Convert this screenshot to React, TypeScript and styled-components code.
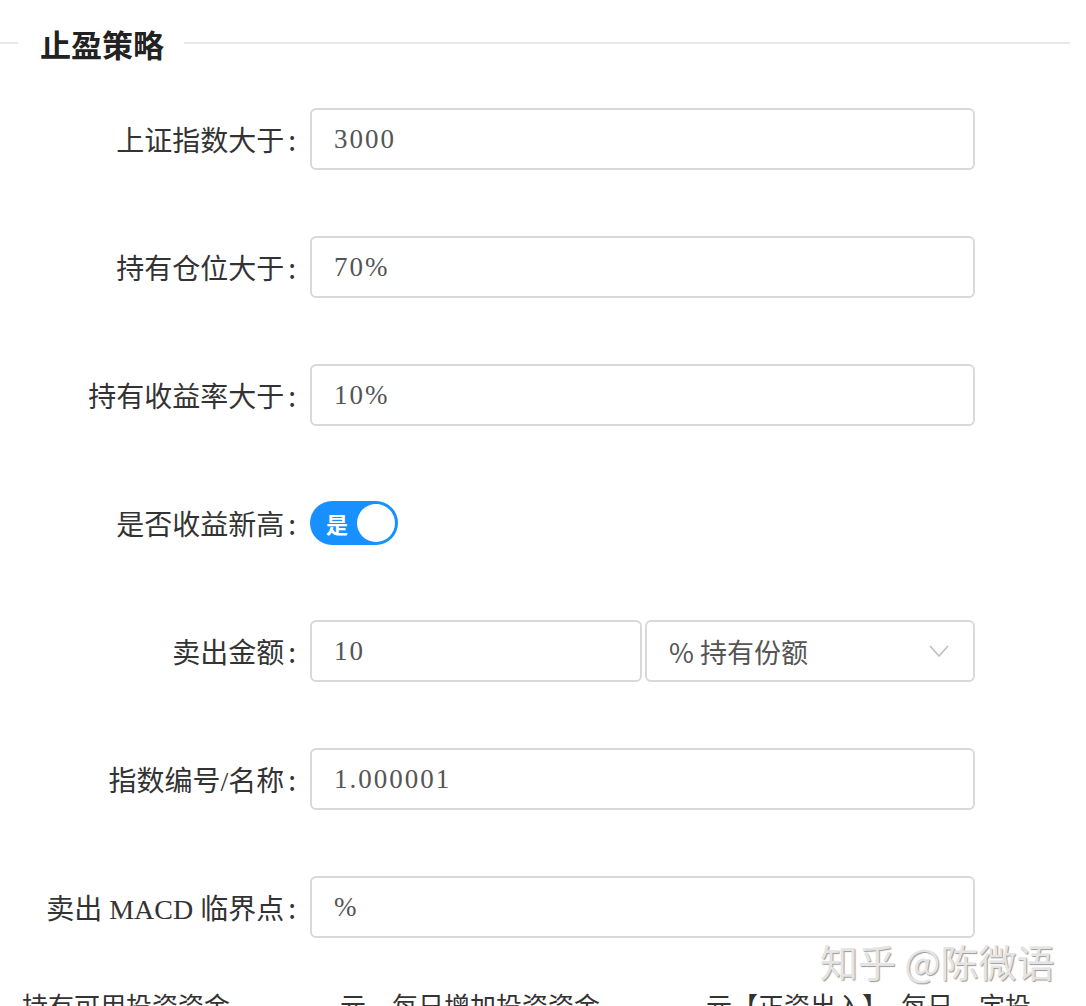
import React from "react";
import styled, { createGlobalStyle } from "styled-components";

const Global = createGlobalStyle`
  html, body { margin: 0; padding: 0; background: #fff; }
  body { font-family: "Liberation Serif", "Noto Sans CJK SC", serif; color: #333; }
  * { box-sizing: border-box; }
`;

const Page = styled.div`
  position: relative;
  width: 1086px;
  padding: 0 16px 0 0;
`;

const Legend = styled.div`
  display: flex;
  align-items: center;
  height: 86px;
  &::before {
    content: "";
    width: 18px;
    height: 2px;
    background: #e8e8e8;
  }
  &::after {
    content: "";
    flex: 1;
    height: 2px;
    background: #e8e8e8;
  }
`;

const LegendText = styled.span`
  font-family: "Noto Sans CJK SC", sans-serif;
  font-weight: 700;
  font-size: 31px;
  color: #222;
  padding: 0 20px 0 22px;
`;

const Form = styled.div`
  display: flex;
  flex-direction: column;
  gap: 66px;
  margin-top: 22px;
`;

const Row = styled.div`
  display: flex;
  align-items: center;
  height: 62px;
`;

const Label = styled.label`
  width: 296px;
  flex: none;
  text-align: right;
  margin-right: 14px;
  font-family: "Liberation Serif", "Noto Sans CJK SC", serif;
  font-size: 28px;
  color: #333;
  white-space: nowrap;
`;

const Colon = styled.span`
  font-family: "Noto Sans CJK SC", sans-serif;
  margin-left: 4px;
`;

const Field = styled.div<{ $w?: number }>`
  width: ${(p) => p.$w ?? 665}px;
  height: 62px;
  border: 2px solid #d9d9d9;
  border-radius: 6px;
  display: flex;
  align-items: center;
  padding: 0 22px;
  font-family: "Liberation Serif", "Noto Sans CJK SC", serif;
  font-size: 27px;
  letter-spacing: 2px;
  color: #555;
  background: #fff;
`;

const Pair = styled.div`
  display: flex;
  gap: 3px;
`;

const SelectBox = styled(Field)`
  justify-content: space-between;
  font-family: "Noto Sans CJK SC", sans-serif;
  font-size: 27px;
  letter-spacing: 0;
  padding-right: 24px;
`;

const Switch = styled.div`
  width: 88px;
  height: 44px;
  border-radius: 22px;
  background: #1890ff;
  display: flex;
  align-items: center;
  justify-content: space-between;
  padding: 0 3px 0 16px;
`;

const SwitchText = styled.span`
  font-family: "Noto Sans CJK SC", sans-serif;
  font-size: 22px;
  font-weight: 700;
  color: #fff;
`;

const Knob = styled.span`
  width: 38px;
  height: 38px;
  border-radius: 50%;
  background: #fff;
`;

const Watermark = styled.div`
  position: absolute;
  left: 820px;
  top: 933px;
  font-family: "Noto Sans CJK SC", sans-serif;
  font-size: 38px;
  color: #e4e4e4;
  text-shadow: 1px 1px 1px #9a9a9a;
  white-space: nowrap;
`;

const Footer = styled.div`
  margin-top: 48px;
  padding-left: 22px;
  font-family: "Noto Sans CJK SC", sans-serif;
  font-size: 26px;
  color: #333;
  white-space: nowrap;
`;

const Blank = styled.span<{ $w: number }>`
  display: inline-block;
  width: ${(p) => p.$w}px;
`;

const Chevron = () => (
  <svg width="20" height="12" viewBox="0 0 20 12" fill="none">
    <path d="M1 1l9 10 9-10" stroke="#bfbfbf" strokeWidth="1.6" />
  </svg>
);

const FormLabel = ({ children }: { children: React.ReactNode }) => (
  <Label>
    {children}
    <Colon>:</Colon>
  </Label>
);

export default function App() {
  return (
    <>
      <Global />
      <Page>
        <Legend>
          <LegendText>止盈策略</LegendText>
        </Legend>
        <Form>
          <Row>
            <FormLabel>上证指数大于</FormLabel>
            <Field>3000</Field>
          </Row>
          <Row>
            <FormLabel>持有仓位大于</FormLabel>
            <Field>70%</Field>
          </Row>
          <Row>
            <FormLabel>持有收益率大于</FormLabel>
            <Field>10%</Field>
          </Row>
          <Row>
            <FormLabel>是否收益新高</FormLabel>
            <Switch>
              <SwitchText>是</SwitchText>
              <Knob />
            </Switch>
          </Row>
          <Row>
            <FormLabel>卖出金额</FormLabel>
            <Pair>
              <Field $w={332}>10</Field>
              <SelectBox $w={330}>
                <span>% 持有份额</span>
                <Chevron />
              </SelectBox>
            </Pair>
          </Row>
          <Row>
            <FormLabel>指数编号/名称</FormLabel>
            <Field>1.000001</Field>
          </Row>
          <Row>
            <FormLabel>卖出 MACD 临界点</FormLabel>
            <Field>%</Field>
          </Row>
        </Form>
        <Footer>
          持有可用投资资金<Blank $w={110} />元，每日增加投资资金<Blank $w={106} />元【正资出入】，每日，定投
        </Footer>
        <Watermark>知乎 @陈微语</Watermark>
      </Page>
    </>
  );
}
